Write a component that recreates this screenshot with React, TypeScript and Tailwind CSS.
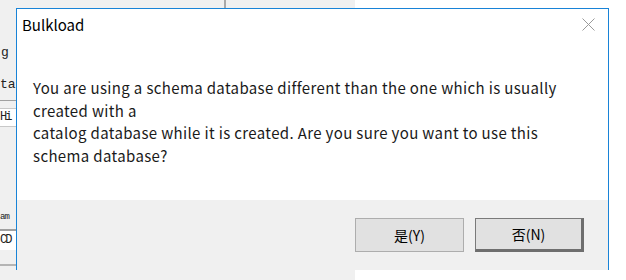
import React from "react";

const uiFont = { fontFamily: '"Noto Sans CJK SC", "Noto Sans", sans-serif' };

export default function App() {
  return (
    <div className="relative w-[626px] h-[280px] overflow-hidden flex bg-white">
      {/* Underlying window */}
      <div className="w-[355px] h-full bg-[#f0f0f0] relative font-['Liberation_Mono',monospace] text-[13px] text-[#222]">
        <div className="absolute left-[224px] top-0 w-[2px] h-[10px] bg-[#a8a8a8]" />
        <div className="flex flex-col pt-[43px]">
          <div className="h-[20px] leading-[20px] pl-[1px]">g</div>
          <div className="h-[12px]" />
          <div className="h-[20px] leading-[20px]">ta</div>
          <div className="h-[5px]" />
          <div className="h-[1px] w-[16px] bg-[#a0a0a0]" />
          <div className="h-[7px]" />
          <div className="h-[19px] leading-[17px] w-[16px] bg-white border-y border-[#c8c8c8] text-[12px] tracking-[-2px]">
            Hi
          </div>
          <div className="h-[81px]" />
          <div className="h-[18px] leading-[18px] text-[9px] tracking-[-1px]">am</div>
          <div className="h-[3px]" />
          <div className="h-[2px] w-[16px] bg-[#a0a0a0]" />
          <div className="h-[19px] leading-[19px] w-[16px] bg-white text-[12px] tracking-[-2px]">CD</div>
          <div className="h-[14px]" />
          <div className="h-[2px] w-[16px] bg-[#b4b4b4]" />
        </div>
      </div>
      <div className="flex-1 bg-white" />

      {/* Dialog */}
      <div
        className="absolute left-[16px] top-[8px] w-[593px] h-[262px] border-t border-l border-r border-[#1883d7] flex flex-col"
        style={uiFont}
      >
        <div className="h-[191px] bg-white relative">
          <div className="flex items-start justify-between">
            <div className="pl-[5px] pt-[5px] text-[15px] leading-[22px] text-black">Bulkload</div>
            <svg className="mt-[9px] mr-[13px]" width="13" height="13" viewBox="0 0 13 13">
              <path d="M0.5 0.5 L12.5 12.5 M12.5 0.5 L0.5 12.5" stroke="#9a9a9a" strokeWidth="1" />
            </svg>
          </div>
          <div className="pl-[16px] pt-[41px] text-[15px] leading-[22.5px] tracking-[0.36px] text-[#1a1a1a]">
            <div>You are using a schema database different than the one which is usually</div>
            <div>created with a</div>
            <div>catalog database while it is created. Are you sure you want to use this</div>
            <div>schema database?</div>
          </div>
        </div>
        <div className="flex-1 bg-[#f0f0f0] flex justify-end items-start pt-[18px] pr-[24px] gap-[11px]">
          <button className="w-[109px] h-[34px] bg-[#e1e1e1] border border-[#adadad] text-[14px] text-black flex items-center justify-center">
            是(Y)
          </button>
          <button className="w-[109px] h-[34px] bg-[#e1e1e1] border border-[#7a7a7a] border-r-[3px] border-b-[3px] border-r-[#6e6e6e] border-b-[#6e6e6e] text-[14px] text-black flex items-center justify-center">
            否(N)
          </button>
        </div>
      </div>
    </div>
  );
}
